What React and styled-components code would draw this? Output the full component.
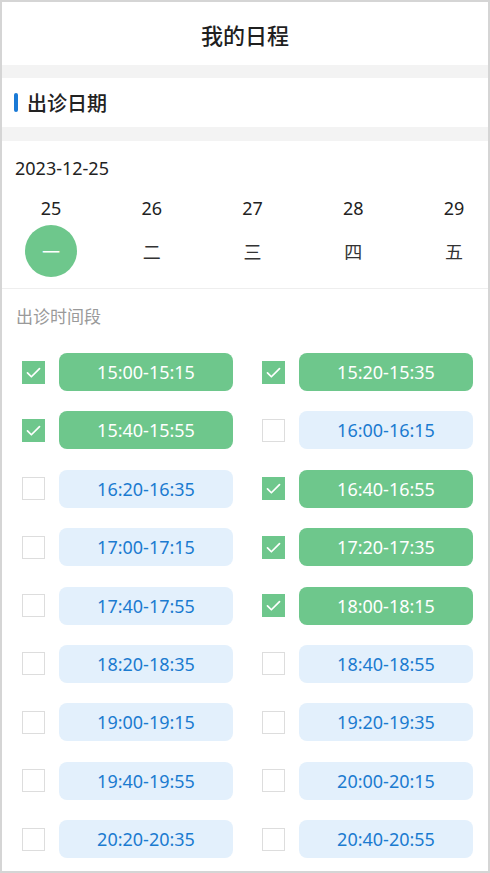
import React from "react";
import styled, { createGlobalStyle } from "styled-components";

const GlobalStyle = createGlobalStyle`
  html, body {
    margin: 0;
    padding: 0;
    background: #ffffff;
  }
  body {
    font-family: "Noto Sans", "Noto Sans CJK SC", sans-serif;
    color: #222;
  }
`;

const Page = styled.div`
  width: 490px;
  height: 873px;
  box-sizing: border-box;
  border: 2px solid #d5d5d5;
  overflow: hidden;
  background: #fff;
`;

const Header = styled.div`
  height: 63px;
  display: flex;
  align-items: center;
  justify-content: center;
  font-size: 22px;
  font-weight: 500;
  color: #1f1f1f;
`;

const Band = styled.div`
  height: ${(p) => p.h}px;
  background: #f3f3f3;
`;

const SectionTitle = styled.div`
  height: 49px;
  display: flex;
  align-items: center;
  padding-left: 12px;
  font-size: 20px;
  font-weight: 500;
  color: #222;
`;

const Mark = styled.span`
  width: 4px;
  height: 19px;
  border-radius: 2px;
  background: #1a7ad6;
  margin-right: 9px;
`;

const DateBlock = styled.div`
  padding: 15px 0 11px;
  border-bottom: 1px solid #eeeeee;
`;

const DateText = styled.div`
  padding-left: 13px;
  font-size: 18px;
  line-height: 24px;
  color: #222;
`;

const Days = styled.div`
  display: flex;
  justify-content: space-between;
  padding: 16px 8px 0 23px;
`;

const Day = styled.div`
  width: 52px;
  display: flex;
  flex-direction: column;
  align-items: center;
  gap: 5px;
`;

const DayNum = styled.div`
  font-size: 18px;
  line-height: 24px;
  color: #222;
`;

const Weekday = styled.div`
  width: 52px;
  height: 52px;
  border-radius: 50%;
  display: flex;
  align-items: center;
  justify-content: center;
  font-size: 18px;
  color: ${(p) => (p.active ? "#fff" : "#333")};
  background: ${(p) => (p.active ? "#6ec78c" : "transparent")};
`;

const SubTitle = styled.div`
  padding: 16px 0 0 14px;
  font-size: 17px;
  line-height: 24px;
  color: #9a9a9a;
`;

const Grid = styled.div`
  display: grid;
  grid-template-columns: 211px 211px;
  column-gap: 29px;
  row-gap: 20.4px;
  padding: 24px 0 0 20px;
`;

const Cell = styled.div`
  display: flex;
  align-items: center;
  gap: 14px;
  height: 38px;
`;

const Check = styled.div`
  width: 23px;
  height: 23px;
  box-sizing: border-box;
  display: flex;
  align-items: center;
  justify-content: center;
  border: ${(p) => (p.on ? "none" : "1px solid #dddddd")};
  background: ${(p) => (p.on ? "#6ec78c" : "#fff")};
`;

const Slot = styled.div`
  flex: 1;
  height: 38px;
  border-radius: 8px;
  display: flex;
  align-items: center;
  justify-content: center;
  font-size: 18px;
  color: ${(p) => (p.on ? "#ffffff" : "#1b7bd0")};
  background: ${(p) => (p.on ? "#6ec78c" : "#e3f0fc")};
`;

const days = [
  { n: "25", w: "一", active: true },
  { n: "26", w: "二" },
  { n: "27", w: "三" },
  { n: "28", w: "四" },
  { n: "29", w: "五" },
];

const slots = [
  ["15:00-15:15", true],
  ["15:20-15:35", true],
  ["15:40-15:55", true],
  ["16:00-16:15", false],
  ["16:20-16:35", false],
  ["16:40-16:55", true],
  ["17:00-17:15", false],
  ["17:20-17:35", true],
  ["17:40-17:55", false],
  ["18:00-18:15", true],
  ["18:20-18:35", false],
  ["18:40-18:55", false],
  ["19:00-19:15", false],
  ["19:20-19:35", false],
  ["19:40-19:55", false],
  ["20:00-20:15", false],
  ["20:20-20:35", false],
  ["20:40-20:55", false],
];

const Tick = () => (
  <svg width="17" height="17" viewBox="0 0 24 24" fill="none">
    <path d="M3.5 12.5l5.5 5.5L20.5 6.5" stroke="#fff" strokeWidth="2.4" strokeLinecap="round" strokeLinejoin="round" />
  </svg>
);

const App = () => {
  return (
    <Page>
      <GlobalStyle />
      <Header>我的日程</Header>
      <Band h={13} />
      <SectionTitle>
        <Mark />
        出诊日期
      </SectionTitle>
      <Band h={14} />
      <DateBlock>
        <DateText>2023-12-25</DateText>
        <Days>
          {days.map((d) => (
            <Day key={d.n}>
              <DayNum>{d.n}</DayNum>
              <Weekday active={d.active}>{d.w}</Weekday>
            </Day>
          ))}
        </Days>
      </DateBlock>
      <SubTitle>出诊时间段</SubTitle>
      <Grid>
        {slots.map(([t, on]) => (
          <Cell key={t}>
            <Check on={on}>{on && <Tick />}</Check>
            <Slot on={on}>{t}</Slot>
          </Cell>
        ))}
      </Grid>
    </Page>
  );
};

export default App;
